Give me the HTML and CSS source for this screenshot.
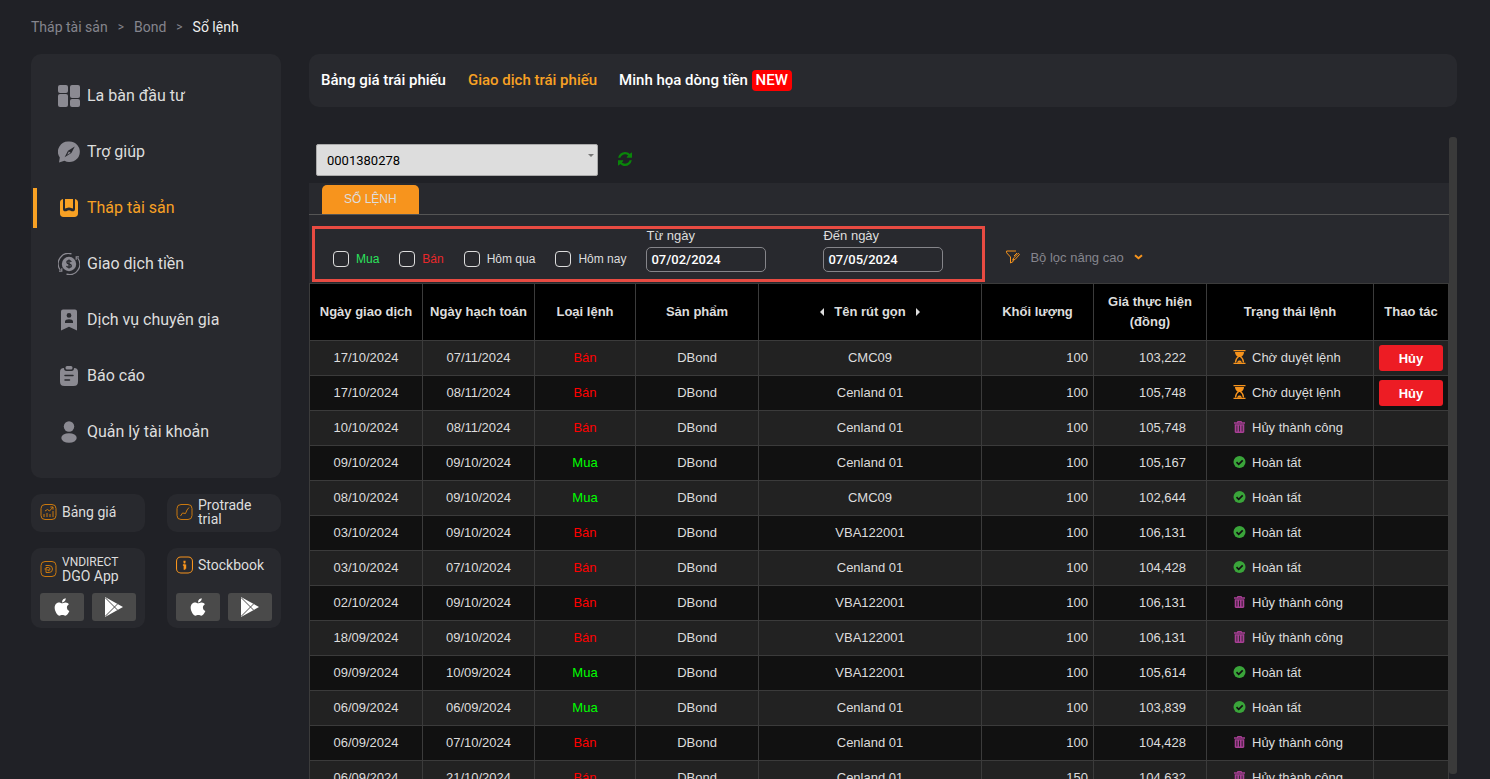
FILE: index.html
```html
<!DOCTYPE html>
<html lang="vi">
<head>
  <meta charset="utf-8">
  <meta name="viewport" content="width=device-width, initial-scale=1">
  <title>Sổ lệnh</title>
  <link rel="stylesheet" href="styles.css">
</head>
<body>

  <!-- shared icons -->
  <svg class="sprite" aria-hidden="true">
    <symbol id="i-apple" viewBox="0 0 384 512"><path d="M318.700 268.700c-.2-36.700 16.400-64.400 50-84.800-18.800-26.900-47.200-41.700-84.700-44.600-35.500-2.800-74.300 20.700-88.500 20.700-15 0-49.400-19.700-76.400-19.700C63.300 141.200 4 184.800 4 273.500q0 39.300 14.400 81.200c12.800 36.700 59 126.700 107.200 125.200 25.200-.6 43-17.900 75.800-17.900 31.800 0 48.300 17.900 76.400 17.900 48.600-.7 90.400-82.500 102.600-119.300-65.200-30.700-61.700-90-61.700-91.900zm-56.600-164.200c27.300-32.400 24.800-61.900 24-72.500-24.100 1.400-52 16.400-67.900 34.900-17.500 19.800-27.800 44.300-25.600 71.900 26.100 2 49.900-11.400 69.500-34.300z"/></symbol>
    <symbol id="i-play" viewBox="0 0 20 20"><path d="M1 0L19 10L1 20Z"/><path d="M1 .5L13.500 13M1 19.500L13.500 7" fill="none" stroke="#4a4a4a" stroke-width="1"/></symbol>
    <symbol id="i-wait" viewBox="0 0 12 14"><path d="M0 0h12v1.300H0zM0 12.700h12V14H0z"/><path d="M1.500 2h9c0 2-1 3.800-3 5H4.500C2.500 5.800 1.500 4 1.500 2z"/><path d="M5.200 6.500C3 8 2 9.800 2 12.500M6.800 6.500C9 8 10 9.800 10 12.500" fill="none" stroke="currentColor" stroke-width="1.200"/><path d="M3.500 12.700C4 11 5 10.400 6 10.400s2 .6 2.500 2.300z"/></symbol>
    <symbol id="i-trash" viewBox="0 0 12 12"><path fill-rule="evenodd" d="M3.500 1.200C3.500.4 4 0 4.600 0h2.800c.6 0 1.100.4 1.100 1.200H11.500v1.600H.5V1.200zM4.600 1.200h2.800V.9H4.600zM1.200 3.200h9.600v7.600c0 .7-.5 1.200-1.200 1.200H2.400c-.7 0-1.200-.5-1.200-1.200zM3 4.500v6h.8v-6zm2.600 0v6h.8v-6zm2.600 0v6H9v-6z"/></symbol>
    <symbol id="i-done" viewBox="0 0 12 12"><circle cx="6" cy="6" r="6"/><path d="M3 6.200L5.200 8.300L9.200 4.300" fill="none" stroke="#111" stroke-width="1.700"/></symbol>
  </svg>

  <nav class="breadcrumb">
    <a href="#">Tháp tài sản</a><span>&gt;</span><a href="#">Bond</a><span>&gt;</span><a href="#" class="current">Sổ lệnh</a>
  </nav>

  <div class="layout">
    <aside class="sidebar">
      <nav class="menu">
        <a href="#"><svg viewBox="0 0 22 22"><rect width="10" height="8" rx="2"/><rect y="9" width="10" height="13" rx="2"/><rect x="12" width="10" height="13" rx="2"/><rect x="12" y="14" width="10" height="8" rx="2"/></svg>La bàn đầu tư</a>
        <a href="#"><svg viewBox="0 0 22 22"><path fill-rule="evenodd" d="M11.500 0.500a10.300 10.300 0 1 1-5 19.300L1 21.500l.8-4.900A10.300 10.300 0 0 1 11.500.5zM16.800 5.500L10 9.700L6.600 16.200L13.400 12zM10.800 10.500l1.800 1.200-3.400 2z"/></svg>Trợ giúp</a>
        <a href="#" class="active"><svg viewBox="0 0 22 22"><path fill-rule="evenodd" d="M5 2v10c0 1.700.8 2.300 2.300 2.300 1.600 0 2.300-1.100 3.700-1.100s2.100 1.100 3.700 1.100c1.500 0 2.300-.6 2.300-2.300V2c1.900.3 3 1.600 3 3.500v11c0 2.300-1.400 3.500-3.500 3.500h-11C3.300 20 2 18.800 2 16.500v-11C2 3.600 3.100 2.300 5 2zM7 2h8v9.500c-1.600 0-2-1-4-1s-2.400 1-4 1z"/></svg>Tháp tài sản</a>
        <a href="#"><svg viewBox="0 0 22 22"><circle cx="11" cy="11" r="7.200"/><path d="M13.500 .800A10.400 10.400 0 0 0 2.300 17M8.500 21.200A10.400 10.400 0 0 0 19.700 5M1 18.200h2.800v-3M21 3.800h-2.800v3" fill="none" stroke="currentColor" stroke-width="1.200"/><path d="M13.200 9c-.3-1-1-1.300-2.200-1.300-1.300 0-2.100.6-2.100 1.600 0 2.400 4.400 1 4.400 3.500 0 1-.9 1.600-2.300 1.600-1.300 0-2.200-.5-2.400-1.600M11 6.500v9" fill="none" stroke="#28292e" stroke-width="1.300"/></svg>Giao dịch tiền</a>
        <a href="#"><svg viewBox="0 0 22 22"><path fill-rule="evenodd" d="M5 .500h12a2 2 0 0 1 2 2v19l-8-3.700-8 3.700v-19a2 2 0 0 1 2-2zM11 4a2.400 2.400 0 1 0 0 4.800A2.400 2.400 0 0 0 11 4zM7 14h8v-1.500C15 11 13 10.200 11 10.200S7 11 7 12.500z"/></svg>Dịch vụ chuyên gia</a>
        <a href="#"><svg viewBox="0 0 22 22"><rect x="7.500" y="1" width="7" height="3.500" rx="1.500"/><path d="M6 3c0 2 .8 3 2.500 3h5C15.200 6 16 5 16 3c2.800 0 4 1.400 4 4v9.500c0 3-1.200 4.500-4.500 4.500h-9C3.200 21 2 19.500 2 16.500V7c0-2.600 1.200-4 4-4z"/><path d="M7 10.500h8M7 15h4.500" stroke="#28292e" stroke-width="1.500" stroke-linecap="round"/></svg>Báo cáo</a>
        <a href="#"><svg viewBox="0 0 22 22"><circle cx="11" cy="5.500" r="5.200"/><ellipse cx="11" cy="17" rx="7.700" ry="4.800"/></svg>Quản lý tài khoản</a>
      </nav>

      <div class="apps">
        <a href="#" class="app">
          <svg class="app-icon" viewBox="0 0 16 16"><rect x=".5" y=".5" width="15" height="15" rx="4"/><path d="M3.500 10v3M6.500 9v4M9.500 10v3M12.500 7v6M4.500 7L7 5.500l2 1.500L12.500 3M9.800 3h2.700v2.700"/></svg>
          <span>Bảng giá</span>
        </a>
        <a href="#" class="app">
          <svg class="app-icon" viewBox="0 0 16 16"><rect x=".5" y=".5" width="15" height="15" rx="4"/><path d="M4 12l2-3 3 .5L10.500 6l2-2.500"/></svg>
          <span>Protrade trial</span>
        </a>
        <div class="app with-stores">
          <svg class="app-icon" viewBox="0 0 16 16"><rect x=".5" y=".5" width="15" height="15" rx="4"/><path d="M5 4.500h3.500a3.500 3.500 0 0 1 0 7H5.500v-5h2.800a1.700 1.700 0 0 1 0 3.200H7.500V8M4 8h2"/></svg>
          <span><small>VNDIRECT</small> DGO App</span>
          <div class="stores">
            <a href="#" aria-label="App Store"><svg><use href="#i-apple"/></svg></a>
            <a href="#" aria-label="Google Play"><svg><use href="#i-play"/></svg></a>
          </div>
        </div>
        <div class="app with-stores">
          <svg class="app-icon bright" viewBox="0 0 16 16"><rect x=".5" y=".5" width="15" height="15" rx="4"/><path d="M8 4v2.500M6.500 8H8v4.500M7 4.800h2M8.800 7.500v4" stroke-width="1.600"/></svg>
          <span>Stockbook</span>
          <div class="stores">
            <a href="#" aria-label="App Store"><svg><use href="#i-apple"/></svg></a>
            <a href="#" aria-label="Google Play"><svg><use href="#i-play"/></svg></a>
          </div>
        </div>
      </div>
    </aside>

    <main class="main">
      <nav class="tabs">
        <a href="#">Bảng giá trái phiếu</a>
        <a href="#" class="active">Giao dịch trái phiếu</a>
        <a href="#">Minh họa dòng tiền <span class="new">NEW</span></a>
      </nav>

      <div class="scroller">
        <div class="content">
          <div class="account">
            <div class="select">
              <select aria-label="Tài khoản">
                <option>0001380278</option>
              </select>
            </div>
            <button class="refresh" aria-label="Làm mới">
              <svg viewBox="0 0 1536 1536"><path d="M1511 928q0 5-1 7-64 268-268 434.500T764 1536q-146 0-282.500-55T238 1324l-129 129q-19 19-45 19t-45-19-19-45V960q0-26 19-45t45-19h448q26 0 45 19t19 45-19 45l-137 137q71 66 161 102t187 36q134 0 250-65t186-179q11-17 53-117 8-23 30-23h192q13 0 22.500 9.500t9.500 22.500zm25-800v448q0 26-19 45t-45 19h-448q-26 0-45-19t-19-45 19-45l138-138q-148-137-349-137-134 0-250 65T332 500q-11 17-53 117-8 23-30 23H50q-13 0-22.500-9.500T18 608v-7q65-268 270-434.500T768 0q146 0 284 55.500T1297 212l130-129q19-19 45-19t45 19 19 45z"/></svg>
            </button>
          </div>

          <div class="panel">
            <div class="panel-head">
              <a href="#">SỔ LỆNH</a>
            </div>

            <form class="filters">
              <div class="quick">
                <label class="check buy"><input type="checkbox">Mua</label>
                <label class="check sell"><input type="checkbox">Bán</label>
                <label class="check"><input type="checkbox">Hôm qua</label>
                <label class="check"><input type="checkbox">Hôm nay</label>
                <div class="dates">
                  <label>Từ ngày <input type="text" value="07/02/2024"></label>
                  <label>Đến ngày <input type="text" value="07/05/2024"></label>
                </div>
              </div>
              <button type="button" class="advanced">
                <svg width="14" height="14" viewBox="0 0 14 14"><path d="M10 1H.600v1.800L4.500 7v6l2.600-1.500V9M8 6l3-3M12.300 3.300l1.200 1.200L9 9.500l-2 .6.500-2z"/></svg>
                Bộ lọc nâng cao
                <svg width="9" height="6" viewBox="0 0 9 6"><path d="M1 1.200l3.500 3L8 1.200" stroke-width="2"/></svg>
              </button>
            </form>

            <table class="orders">
              <colgroup>
                <col class="w-wide"><col class="w-date"><col class="w-type"><col class="w-product"><col>
                <col class="w-date"><col class="w-wide"><col class="w-status"><col class="w-action">
              </colgroup>
              <thead>
                <tr>
                  <th>Ngày giao dịch</th>
                  <th>Ngày hạch toán</th>
                  <th>Loại lệnh</th>
                  <th>Sản phẩm</th>
                  <th><i class="prev"></i>Tên rút gọn<i class="next"></i></th>
                  <th>Khối lượng</th>
                  <th>Giá thực hiện (đồng)</th>
                  <th>Trạng thái lệnh</th>
                  <th>Thao tác</th>
                </tr>
              </thead>
              <tbody id="orders"></tbody>
            </table>
          </div>
        </div>
        <div class="thumb"></div>
      </div>
    </main>
  </div>

  <script>
    const statusText = {
      wait: 'Chờ duyệt lệnh',
      trash: 'Hủy thành công',
      done: 'Hoàn tất'
    };

    // trade date, settle date, side, bond, quantity, price, status
    const orders = [
      ['17/10/2024', '07/11/2024', 'Bán', 'CMC09', '100', '103,222', 'wait'],
      ['17/10/2024', '08/11/2024', 'Bán', 'Cenland 01', '100', '105,748', 'wait'],
      ['10/10/2024', '08/11/2024', 'Bán', 'Cenland 01', '100', '105,748', 'trash'],
      ['09/10/2024', '09/10/2024', 'Mua', 'Cenland 01', '100', '105,167', 'done'],
      ['08/10/2024', '09/10/2024', 'Mua', 'CMC09', '100', '102,644', 'done'],
      ['03/10/2024', '09/10/2024', 'Bán', 'VBA122001', '100', '106,131', 'done'],
      ['03/10/2024', '07/10/2024', 'Bán', 'Cenland 01', '100', '104,428', 'done'],
      ['02/10/2024', '09/10/2024', 'Bán', 'VBA122001', '100', '106,131', 'trash'],
      ['18/09/2024', '09/10/2024', 'Bán', 'VBA122001', '100', '106,131', 'trash'],
      ['09/09/2024', '10/09/2024', 'Mua', 'VBA122001', '100', '105,614', 'done'],
      ['06/09/2024', '06/09/2024', 'Mua', 'Cenland 01', '100', '103,839', 'done'],
      ['06/09/2024', '07/10/2024', 'Bán', 'Cenland 01', '100', '104,428', 'trash'],
      ['06/09/2024', '21/10/2024', 'Bán', 'Cenland 01', '150', '104,632', 'trash']
    ];

    document.getElementById('orders').innerHTML = orders.map(([trade, settle, side, bond, qty, price, status]) => `
      <tr>
        <td>${trade}</td>
        <td>${settle}</td>
        <td class="${side === 'Mua' ? 'buy' : 'sell'}">${side}</td>
        <td>DBond</td>
        <td>${bond}</td>
        <td class="qty">${qty}</td>
        <td class="price">${price}</td>
        <td class="status ${status}"><svg><use href="#i-${status}"/></svg>${statusText[status]}</td>
        <td class="action">${status === 'wait' ? '<button class="cancel">Hủy</button>' : ''}</td>
      </tr>`).join('');
  </script>
</body>
</html>
```

FILE: styles.css
```css
* {
  box-sizing: border-box;
}

body {
  margin: 0;
  padding: 0 33px 0 31px;
  height: 100vh;
  display: flex;
  flex-direction: column;
  overflow: hidden;
  background: #202126;
  color: #ddd;
  font-family: Roboto, "Liberation Sans", sans-serif;
  font-size: 14px;
}

a {
  color: inherit;
  text-decoration: none;
}

button {
  border: 0;
  padding: 0;
  background: none;
  font: inherit;
  cursor: pointer;
}

.sprite {
  position: absolute;
  width: 0;
  height: 0;
}

.breadcrumb {
  display: flex;
  gap: 10px;
  height: 54px;
  align-items: center;
  color: #85858d;
}

.breadcrumb span {
  font-size: 12px;
}

.breadcrumb .current {
  color: #eee;
}

.layout {
  flex: 1;
  min-height: 0;
  display: flex;
  gap: 28px;
}

/* sidebar */
.sidebar {
  flex: 0 0 250px;
}

.menu {
  display: flex;
  flex-direction: column;
  gap: 16px;
  padding: 22px 2px 26px;
  border-radius: 10px;
  background: #28292e;
  font-size: 16px;
}

.menu a {
  display: flex;
  align-items: center;
  gap: 7px;
  height: 40px;
  padding: 0 0 1px 21px;
  border-left: 4px solid transparent;
  border-radius: 0 2px 2px 0;
}

.menu svg {
  width: 22px;
  height: 22px;
  fill: currentColor;
  color: #8b8a92;
}

.menu .active,
.menu .active svg {
  color: #f8a124;
}

.menu .active {
  border-color: #f8a124;
}

.apps {
  display: grid;
  grid-template-columns: 1fr 1fr;
  gap: 16px 22px;
  margin-top: 16px;
}

.app {
  display: flex;
  flex-wrap: wrap;
  align-items: center;
  column-gap: 5px;
  min-height: 38px;
  padding: 4px 9px 6px;
  border-radius: 10px;
  background: #28292e;
  line-height: 14px;
}

.app > span {
  flex: 1;
}

.app small {
  display: block;
  font-size: 12px;
}

.with-stores {
  min-height: 80px;
  padding: 7px 9px;
  align-content: space-between;
}

.app-icon {
  width: 17px;
  height: 16px;
  fill: none;
  stroke: #c9780f;
}

.app-icon.bright {
  height: 20px;
  stroke: #f7941d;
}

.stores {
  flex: 0 0 100%;
  display: flex;
  gap: 8px;
}

.stores a {
  flex: 1;
  display: flex;
  align-items: center;
  justify-content: center;
  height: 28px;
  border-radius: 3px;
  background: #4a4a4a;
}

.stores svg {
  width: 20px;
  height: 20px;
  fill: #fff;
}

/* main column */
.main {
  flex: 1;
  min-width: 0;
  display: flex;
  flex-direction: column;
}

.tabs {
  display: flex;
  align-items: center;
  gap: 22px;
  height: 53px;
  flex-shrink: 0;
  padding: 0 12px;
  border-radius: 10px;
  background: #28292e;
  color: #fff;
  font-size: 15px;
  font-weight: 500;
  line-height: 21px;
}

.tabs .active {
  color: #f8a124;
}

.new {
  display: inline-block;
  padding: 0 4px;
  border-radius: 4px;
  background: #f00;
}

.scroller {
  flex: 1;
  min-height: 0;
  display: flex;
  margin-top: 30px;
  overflow: hidden;
}

.content {
  flex: 1;
  min-width: 0;
  padding-top: 7px;
}

.thumb {
  width: 8px;
  margin-bottom: 5px;
  border-radius: 3px;
  background: #3a3a3a;
}

.account {
  display: flex;
  align-items: center;
  gap: 20px;
  padding: 0 7px 7px;
}

.select {
  position: relative;
  width: 282px;
}

.select::after {
  content: "";
  position: absolute;
  top: 10px;
  right: 4px;
  border: 3px solid transparent;
  border-top-color: #777;
  border-bottom: 0;
}

.select select {
  display: block;
  appearance: none;
  width: 100%;
  height: 32px;
  padding: 0 10px;
  border: 1px solid #aaa;
  border-radius: 2px;
  background: #ddd;
  color: #000;
  font: 13px Roboto, sans-serif;
}

.refresh {
  padding-bottom: 3px;
}

.refresh svg {
  display: block;
  width: 14px;
  height: 14px;
  fill: #0a850a;
}

.panel {
  background: #28292e;
  font-family: "Liberation Sans", Arial, sans-serif;
  font-size: 13px;
}

.panel-head {
  display: flex;
  padding: 2px 13px 0;
  border-bottom: 1px solid #555;
}

.panel-head a {
  padding: 0 22px;
  border-radius: 5px 5px 0 0;
  background: #f7941d;
  font-size: 12px;
  line-height: 29px;
}

.filters {
  display: flex;
  align-items: flex-end;
  gap: 21px;
  padding: 11px 3px 1px;
}

.quick {
  display: flex;
  align-items: flex-end;
  gap: 20px;
  padding: 0 39px 7px 18px;
  border: 3px solid #e84b42;
}

.check {
  display: flex;
  align-items: center;
  gap: 7px;
  height: 26px;
  font-size: 12px;
}

.check input {
  appearance: none;
  width: 16px;
  height: 16px;
  margin: 0;
  border: 1px solid #ddd;
  border-radius: 4px;
}

.check input:checked {
  background: #f7941d;
}

.check.buy {
  color: #2be35c;
}

.check.sell {
  color: #e8282b;
}

.dates {
  display: flex;
  gap: 57px;
}

.dates label {
  display: flex;
  flex-direction: column;
  gap: 4px;
  line-height: 14px;
}

.dates input {
  width: 120px;
  height: 25px;
  padding: 0 4px;
  border: 1px solid #85858a;
  border-radius: 5px;
  background: none;
  color: #fff;
  font: 500 13px Roboto, sans-serif;
}

.advanced {
  display: flex;
  align-items: center;
  gap: 10px;
  height: 50px;
  color: #85858d;
}

.advanced svg {
  fill: none;
  stroke: #f7941d;
}

/* order book */
.orders {
  width: 100%;
  table-layout: fixed;
  border-collapse: collapse;
  background: #111;
  text-align: center;
}

.w-date { width: 112px; }
.w-wide { width: 113px; }
.w-type { width: 101px; }
.w-product { width: 123px; }
.w-status { width: 167px; }
.w-action { width: 75px; }

.orders th,
.orders td {
  border: 1px solid #3b3b3b;
  padding: 0 5px;
}

.orders th {
  height: 57px;
  background: #000;
  line-height: 20px;
}

.orders td {
  height: 35px;
  padding-bottom: 2px;
}

.orders .action {
  padding-bottom: 0;
}

.orders tbody tr:nth-child(odd) {
  background: #222;
}

.prev,
.next {
  display: inline-block;
  border: 4px solid transparent;
}

.prev {
  margin-right: 10px;
  border-left: 0;
  border-right-color: #ddd;
}

.next {
  margin-left: 10px;
  border-right: 0;
  border-left-color: #ddd;
}

.orders .buy { color: #0f0; }
.orders .sell { color: #f00; }

.orders .qty,
.orders .price {
  text-align: right;
}

.orders .price {
  padding-right: 20px;
}

.orders .status {
  padding-left: 26px;
  text-align: left;
}

.status svg {
  width: 13px;
  height: 12px;
  margin-right: 6px;
  vertical-align: -1px;
  fill: currentColor;
}

.status.wait svg {
  height: 14px;
  vertical-align: -2px;
  color: #f7941d;
}

.status.trash svg { color: #a83f95; }
.status.done svg { color: #3aa53a; }

.cancel {
  display: block;
  width: 100%;
  height: 26px;
  border-radius: 3px;
  background: #ed1c24;
  color: #fff;
  font-weight: bold;
}
```
